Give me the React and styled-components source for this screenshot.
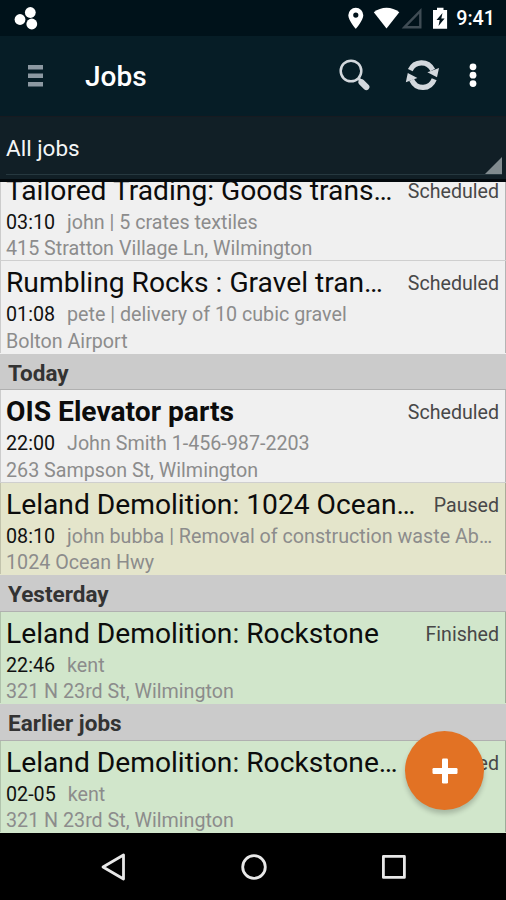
import React from 'react';
import styled, { createGlobalStyle } from 'styled-components';

const GlobalStyle = createGlobalStyle`
  * {
    box-sizing: border-box;
  }
  body {
    margin: 0;
    background: #000;
    font-family: Roboto, "Liberation Sans", sans-serif;
  }
`

const Screen = styled.div`
  display: flex;
  flex-direction: column;
  position: relative;
  width: 506px;
  height: 900px;
  overflow: hidden;
  background: #000;
`
const StatusBar = styled.div`
  display: flex;
  align-items: center;
  height: 36px;
  flex: none;
  padding: 0 11px 0 14px;
  background: #00121a;
`
const StatusIcons = styled.div`
  display: flex;
  align-items: center;
  margin-left: auto;
`
const Clock = styled.span`
  margin-left: 7px;
  color: #fff;
  font-size: 19.7px;
  font-weight: 500;
  line-height: 36px;
  padding-top: 2px;
`
const Toolbar = styled.div`
  display: flex;
  align-items: center;
  height: 80px;
  flex: none;
  padding: 0 29px 0 28px;
  background: #061d26;
`
const ToolbarTitle = styled.h1`
  flex: 1;
  margin: 0 0 0 42px;
  color: #fff;
  font-size: 28px;
  font-weight: 500;
`
const Actions = styled.div`
  display: flex;
  align-items: center;
`
const SyncIcon = styled.svg`
  margin-left: 34px;
`
const MoreIcon = styled.svg`
  margin-left: 28px;
`
const Spinner = styled.div`
  display: flex;
  height: 66px;
  flex: none;
  padding: 0 4px 4px 6px;
  background: #111f26;
  border-top: 1px solid #171a20;
  border-bottom: 3px solid #03090d;
`
const SpinnerField = styled.div`
  display: flex;
  flex: 1;
  align-items: center;
  justify-content: space-between;
  padding-top: 5px;
  border-bottom: 1px solid #26383f;
  color: #f4f6f7;
  font-size: 22.5px;
`
const SpinnerCorner = styled.svg`
  align-self: flex-end;
`
const List = styled.div`
  display: flex;
  flex: none;
  flex-direction: column;
  justify-content: flex-end;
  height: 651px;
  overflow: hidden;
`
const SectionHeader = styled.div`
  height: 36.5px;
  flex: none;
  padding-left: 8px;
  background: #cbcbcb;
  border-bottom: 1px solid #b0b0b0;
  color: #333;
  font-size: 22.5px;
  font-weight: 700;
  line-height: 39.5px;
`
const Row = styled.div`
  height: 92.5px;
  flex: none;
  padding: 5px 7px 0 6px;
  background: ${({ $color }) => $color};
  border-bottom: 1px solid ${({ $last }) => ($last ? 'transparent' : '#cfcfcf')};
  box-shadow: inset 1px 0 rgba(0, 0, 0, .15), inset -1px 0 rgba(0, 0, 0, .25);
`
const TitleLine = styled.div`
  display: flex;
  align-items: center;
  height: 33px;
  margin-bottom: 3.3px;
`
const Title = styled.div`
  flex: 1;
  color: #0c0c0c;
  font-size: 28.2px;
  font-weight: ${({ $bold }) => ($bold ? 700 : 400)};
  line-height: 33px;
  white-space: nowrap;
`
const Status = styled.div`
  padding-top: 2px;
  color: #484848;
  font-size: 19.6px;
`
const Meta = styled.div`
  color: #8c8c8c;
  font-size: 19.7px;
  line-height: 26.5px;
  white-space: nowrap;
`
const Time = styled.span`
  margin-right: 12px;
  color: #111;
`
const Fab = styled.button`
  position: absolute;
  top: 731px;
  left: 405px;
  display: flex;
  align-items: center;
  justify-content: center;
  width: 79px;
  height: 79px;
  padding: 0;
  border: 0;
  border-radius: 50%;
  background: #e27224;
  box-shadow: 0 4px 5px rgba(0, 0, 0, .2);
`
const NavBar = styled.div`
  display: flex;
  flex: 1;
  align-items: center;
  justify-content: space-between;
  padding: 0 98px 0 100px;
  background: #000;
`

const colors = {
  Scheduled: '#f0f0f0',
  Paused: '#e4e5cb',
  Finished: '#d1e6cb',
}

const sections = [
  {
    jobs: [
      { title: 'Tailored Trading: Goods trans…', status: 'Scheduled', time: '03:10', info: 'john | 5 crates textiles', address: '415 Stratton Village Ln, Wilmington' },
      { title: 'Rumbling Rocks : Gravel tran…', status: 'Scheduled', time: '01:08', info: 'pete | delivery of 10 cubic gravel', address: 'Bolton Airport' },
    ],
  },
  {
    name: 'Today',
    jobs: [
      { title: 'OIS Elevator parts', bold: true, status: 'Scheduled', time: '22:00', info: 'John Smith 1-456-987-2203', address: '263 Sampson St, Wilmington' },
      { title: 'Leland Demolition: 1024 Ocean…', status: 'Paused', time: '08:10', info: 'john bubba | Removal of construction waste Ab…', address: '1024 Ocean Hwy' },
    ],
  },
  {
    name: 'Yesterday',
    jobs: [
      { title: 'Leland Demolition: Rockstone', status: 'Finished', time: '22:46', info: 'kent', address: '321 N 23rd St, Wilmington' },
    ],
  },
  {
    name: 'Earlier jobs',
    jobs: [
      { title: 'Leland Demolition: Rockstone…', status: 'Finished', time: '02-05', info: 'kent', address: '321 N 23rd St, Wilmington' },
    ],
  },
]

const Job = ({ job, last }) => (
  <Row $color={colors[job.status]} $last={last}>
    <TitleLine>
      <Title $bold={job.bold}>{job.title}</Title>
      <Status>{job.status}</Status>
    </TitleLine>
    <Meta><Time>{job.time}</Time>{job.info}</Meta>
    <Meta>{job.address}</Meta>
  </Row>
)

const App = () => {
  return (
    <Screen>
      <GlobalStyle />
      <StatusBar>
        <svg width="24" height="24" viewBox="0 0 24 24" fill="#fff">
          <circle cx="6" cy="13.5" r="5.4" />
          <circle cx="16.3" cy="6.5" r="5.4" />
          <circle cx="17.8" cy="18" r="5.4" />
        </svg>
        <StatusIcons>
          <svg width="103" height="24" viewBox="0 0 103 24">
            <path d="M9.8 1.7a7.5 7.5 0 0 0-7.5 7.5c0 5.3 7.5 13.5 7.5 13.5s7.5-8.2 7.5-13.5a7.5 7.5 0 0 0-7.5-7.5zm0 4.8a2.6 2.6 0 1 1 0 5.2 2.6 2.6 0 0 1 0-5.2z" fill="#fff" />
            <path d="M27.8 6.2c7.3-6 18.2-6 25.5 0L40.5 22.5z" fill="#fff" />
            <path d="M58.5 21.2L74.3 5v16.2z" fill="none" stroke="#3f4c54" strokeWidth="2.4" />
            <path d="M91 1.8h6.5v2.3h3.6v18.6H87V4.1h4z" fill="#fff" />
            <path d="M96.5 7l-6 7h3.2l-1.2 6 6.1-7.4h-3.3z" fill="#00121a" />
          </svg>
          <Clock>9:41</Clock>
        </StatusIcons>
      </StatusBar>
      <Toolbar>
        <svg width="15" height="22" viewBox="0 0 15 22" fill="#8c98a1">
          <rect y="0" width="15" height="4.5" />
          <rect y="8.5" width="15" height="4.5" />
          <rect y="17" width="15" height="4.5" />
        </svg>
        <ToolbarTitle>Jobs</ToolbarTitle>
        <Actions>
          <svg width="32" height="34" viewBox="0 0 32 34" fill="none" stroke="#d3d8dd">
            <circle cx="13" cy="12" r="10.3" strokeWidth="2.5" />
            <path d="M20 19l3 3" strokeWidth="3" />
            <path d="M23.5 23.3l4.8 4.7" strokeWidth="6.2" strokeLinecap="round" />
          </svg>
          <SyncIcon width="37" height="34" viewBox="0 0 37 34">
            <g fill="none" stroke="#d3d8dd" strokeWidth="5.2">
              <path d="M6.3 11.2C10.5 2 23.5 1 28.8 11" />
              <path d="M30.2 20.2C26 30.7 12.8 31.5 7.6 20.8" />
            </g>
            <path d="M35 9L33 18.2 23.4 13.2z" fill="#d3d8dd" />
            <path d="M1.8 23.2L3.8 14 13.4 19z" fill="#d3d8dd" />
          </SyncIcon>
          <MoreIcon width="8" height="26" viewBox="0 0 8 26" fill="#fff">
            <circle cx="4" cy="3.8" r="3.4" />
            <circle cx="4" cy="12.2" r="3.4" />
            <circle cx="4" cy="20.6" r="3.4" />
          </MoreIcon>
        </Actions>
      </Toolbar>
      <Spinner>
        <SpinnerField>
          All jobs
          <SpinnerCorner width="17" height="17" viewBox="0 0 17 17" fill="#818b8f">
            <path d="M17 0v17H0z" />
          </SpinnerCorner>
        </SpinnerField>
      </Spinner>
      <List>
        {sections.map((section, index) => (
          <React.Fragment key={index}>
            {section.name && <SectionHeader>{section.name}</SectionHeader>}
            {section.jobs.map((job, i) => (
              <Job key={job.time} job={job} last={i === section.jobs.length - 1} />
            ))}
          </React.Fragment>
        ))}
      </List>
      <Fab aria-label="Add job">
        <svg width="26" height="26" viewBox="0 0 26 26" fill="#fff">
          <rect x="10" y=".5" width="6" height="25" rx="1.2" />
          <rect x=".5" y="10" width="25" height="6" rx="1.2" />
        </svg>
      </Fab>
      <NavBar>
        <svg width="27" height="30" viewBox="0 0 27 30" fill="none" stroke="#e8e8e8" strokeWidth="2.8" strokeLinejoin="round">
          <path d="M3 15L23.5 3v24z" />
        </svg>
        <svg width="28" height="28" viewBox="0 0 28 28" fill="none" stroke="#e8e8e8" strokeWidth="2.8">
          <circle cx="14" cy="14" r="11.3" />
        </svg>
        <svg width="28" height="28" viewBox="0 0 28 28" fill="none" stroke="#e8e8e8" strokeWidth="2.8" strokeLinejoin="round">
          <rect x="3.4" y="3.4" width="21" height="21" />
        </svg>
      </NavBar>
    </Screen>
  )
}

export default App
